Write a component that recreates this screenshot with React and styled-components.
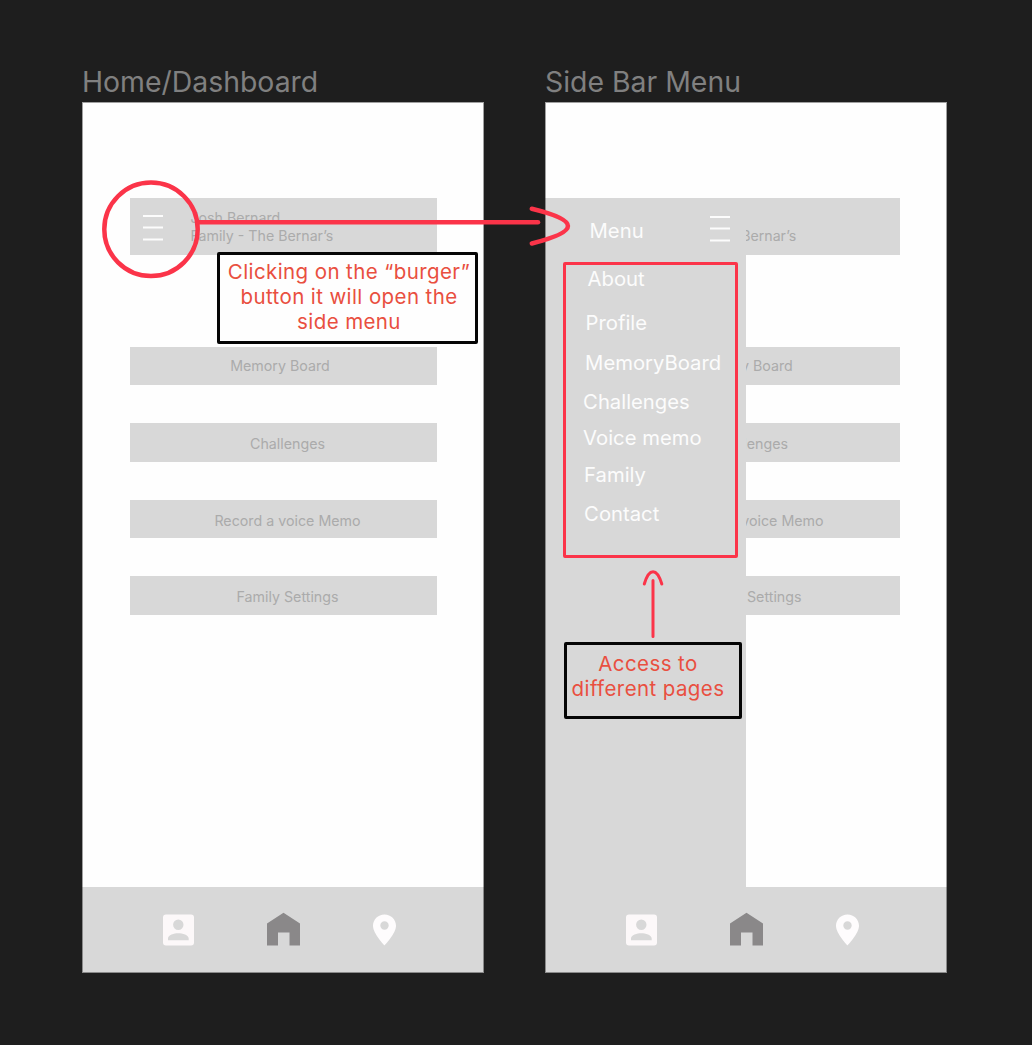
import React from "react";
import styled, { createGlobalStyle } from "styled-components";

const Global = createGlobalStyle`
  * { box-sizing: border-box; }
  body { margin: 0; background: #1e1e1e; }
`;

const Canvas = styled.main`
  position: relative;
  display: flex;
  align-items: flex-start;
  gap: 61px;
  width: 1032px;
  height: 1045px;
  padding: 64px 0 0 82px;
  background: #1e1e1e;
  font-family: Inter, "Liberation Sans", sans-serif;
  overflow: hidden;
`;

const Board = styled.section`
  width: 402px;
`;

const BoardTitle = styled.h2`
  margin: 0;
  height: 38px;
  padding-top: 1px;
  font-size: 28.4px;
  line-height: 34px;
  font-weight: 400;
  color: #808080;
  white-space: nowrap;
`;

const Phone = styled.div`
  position: relative;
  display: flex;
  flex-direction: column;
  width: 402px;
  height: 871px;
  background: #fefefe;
  overflow: hidden;

  &::after {
    content: "";
    position: absolute;
    inset: 0;
    border: 1px solid rgba(30, 30, 30, 0.42);
    pointer-events: none;
  }
`;

const Content = styled.div`
  flex: 1;
  padding: 95.5px 47px 0 48px;
`;

const Header = styled.header`
  display: flex;
  align-items: flex-start;
  height: 57px;
  padding: 11px 0 0 12px;
  background: #d8d8d8;
`;

const UserText = styled.div`
  margin: 0.5px 0 0 26.5px;
  font-size: 14.2px;
  line-height: 17.5px;
  color: #ababab;
  white-space: nowrap;
`;

const ButtonList = styled.div`
  display: flex;
  flex-direction: column;
  gap: 38px;
  margin-top: 92px;
`;

const PageButton = styled.button`
  height: 38.67px;
  padding: ${(p) => p.$drop}px ${(p) => p.$right}px 0 8px;
  border: 0;
  background: #d8d8d8;
  color: #ababab;
  font: 400 14.25px/36px Inter, "Liberation Sans", sans-serif;
  text-align: center;
`;

const BottomNav = styled.nav`
  display: flex;
  height: 86px;
  padding: 25px 0 0 80px;
  background: #d8d8d8;
`;

const NavIcon = styled.svg`
  display: block;
  flex: none;
  margin-right: ${(p) => p.$gap}px;
`;

const Burger = styled.svg`
  display: block;
  flex: none;
  width: 22px;
  height: 38px;
`;

const Drawer = styled.aside`
  position: absolute;
  left: 0;
  top: 95.5px;
  width: 201.4px;
  height: 689.5px;
  background: #d8d8d8;
`;

const DrawerHead = styled.div`
  display: flex;
  justify-content: space-between;
  height: 64px;
  padding: 12px 15px 0 44.5px;
`;

const DrawerTitle = styled.span`
  margin-top: 9.8px;
  font-size: 20.3px;
  line-height: 24px;
  color: #fcfcfc;
`;

const MenuBox = styled.div`
  width: 175.5px;
  height: 296px;
  margin-left: 17.6px;
  padding-top: 2.8px;
  border: 3px solid #fb3449;
  border-radius: 2px;
`;

const MenuItem = styled.div`
  height: ${(p) => p.$height}px;
  padding-left: ${(p) => p.$indent}px;
  font-size: 20.25px;
  line-height: 24px;
  color: #fcfcfc;
  white-space: nowrap;
`;

const Callout = styled.div`
  position: absolute;
  left: ${(p) => p.$x}px;
  top: ${(p) => p.$y}px;
  width: ${(p) => p.$w}px;
  height: ${(p) => p.$h}px;
  padding: ${(p) => p.$pad};
  border: 3px solid #050505;
  border-radius: 2px;
  background: ${(p) => p.$fill};
  color: #e94f40;
  font-size: 20.5px;
  line-height: 25px;
  letter-spacing: 0.4px;
  text-align: center;
  white-space: nowrap;
`;

const CalloutLine = styled.div``;

const Annotations = styled.svg`
  position: absolute;
  left: 0;
  top: 0;
  pointer-events: none;
`;

const pages = [
  { label: "Memory Board", right: 23, drop: 1 },
  { label: "Challenges", right: 0, drop: 3 },
  { label: "Record a voice Memo", right: 0, drop: 3 },
  { label: "Family Settings", right: 0, drop: 3 },
].map((p) => (p.right ? { ...p, right: p.right - 8 } : p));

const menu = [
  { label: "About", height: 44, indent: 22 },
  { label: "Profile", height: 40, indent: 20 },
  { label: "MemoryBoard", height: 39, indent: 19.5 },
  { label: "Challenges", height: 36, indent: 17.5 },
  { label: "Voice memo", height: 36.5, indent: 17.5 },
  { label: "Family", height: 39.5, indent: 18.5 },
  { label: "Contact", height: 24, indent: 18.5 },
];

function BurgerIcon() {
  return (
    <Burger viewBox="0 0 22 38">
      <path d="M1 7H21M1 18.5H21M1 30.5H21" stroke="#fcfcfc" strokeWidth="2.2" />
    </Burger>
  );
}

function HomeContent() {
  return (
    <>
      <Content>
        <Header>
          <BurgerIcon />
          <UserText>
            Josh Bernard
            <br />
            Family - The Bernar’s
          </UserText>
        </Header>
        <ButtonList>
          {pages.map((p) => (
            <PageButton key={p.label} $right={p.right} $drop={p.drop}>
              {p.label}
            </PageButton>
          ))}
        </ButtonList>
      </Content>
      <BottomNav>
        <NavIcon $gap={72} width="33" height="36" viewBox="0 0 33 36">
          <path
            fill="#fcf8f9"
            fillRule="evenodd"
            d="M4 2.5H29Q32 2.5 32 5.500V30.500Q32 33.500 29 33.500H4Q1 33.500 1 30.500V5.500Q1 2.500 4 2.500ZM16.300 7.500A5.200 5.200 0 1 0 16.300 17.900A5.200 5.200 0 1 0 16.300 7.500ZM6 28.200H26.700V26.500C26.700 23 20.500 21.300 16.300 21.300S6 23 6 26.500Z"
          />
        </NavIcon>
        <NavIcon $gap={72} width="33" height="36" viewBox="0 0 33 36">
          <path fill="#8a8889" d="M0 33.500V11.500L16.500 .8L33 11.500V33.500H22.500V20.500H11V33.500Z" />
        </NavIcon>
        <NavIcon $gap={0} width="25" height="36" viewBox="0 0 25 36">
          <path
            fill="#fefcfd"
            fillRule="evenodd"
            d="M12.500 2.500C6 2.500 1 7.500 1 13.800C1 21.800 12.500 33.500 12.500 33.500S24 21.800 24 13.800C24 7.500 19 2.500 12.500 2.500ZM12.500 9.300A4.200 4.200 0 1 1 12.500 17.700A4.200 4.200 0 1 1 12.500 9.300Z"
          />
        </NavIcon>
      </BottomNav>
    </>
  );
}

export default function App() {
  return (
    <>
      <Global />
      <Canvas>
        <Board>
          <BoardTitle>Home/Dashboard</BoardTitle>
          <Phone>
            <HomeContent />
          </Phone>
        </Board>
        <Board>
          <BoardTitle>Side Bar Menu</BoardTitle>
          <Phone>
            <HomeContent />
            <Drawer>
              <DrawerHead>
                <DrawerTitle>Menu</DrawerTitle>
                <BurgerIcon />
              </DrawerHead>
              <MenuBox>
                {menu.map((m) => (
                  <MenuItem key={m.label} $height={m.height} $indent={m.indent}>
                    {m.label}
                  </MenuItem>
                ))}
              </MenuBox>
            </Drawer>
          </Phone>
        </Board>
        <Callout $x={217} $y={252} $w={261} $h={92} $pad="4px 0 0 3px" $fill="#fefefe">
          <CalloutLine>Clicking on the “burger”</CalloutLine>
          <CalloutLine>button it will open the</CalloutLine>
          <CalloutLine>side menu</CalloutLine>
        </Callout>
        <Callout $x={563.5} $y={642} $w={178} $h={76.5} $pad="6px 9px 0 0" $fill="transparent">
          <CalloutLine>Access to</CalloutLine>
          <CalloutLine>different pages</CalloutLine>
        </Callout>
        <Annotations width="1032" height="1045" fill="none" stroke="#fb3449" strokeLinecap="round">
          <circle cx="151" cy="229.300" r="46.700" strokeWidth="4.500" />
          <path d="M199 222.300H538" strokeWidth="4.500" />
          <path d="M531.800 208.800C580 220.500 580 231.500 531.800 243.500" strokeWidth="4.500" />
          <path d="M653 580.500V636.500M644.300 584C649 567.500 657 567.500 661.800 584" strokeWidth="3" />
        </Annotations>
      </Canvas>
    </>
  );
}
